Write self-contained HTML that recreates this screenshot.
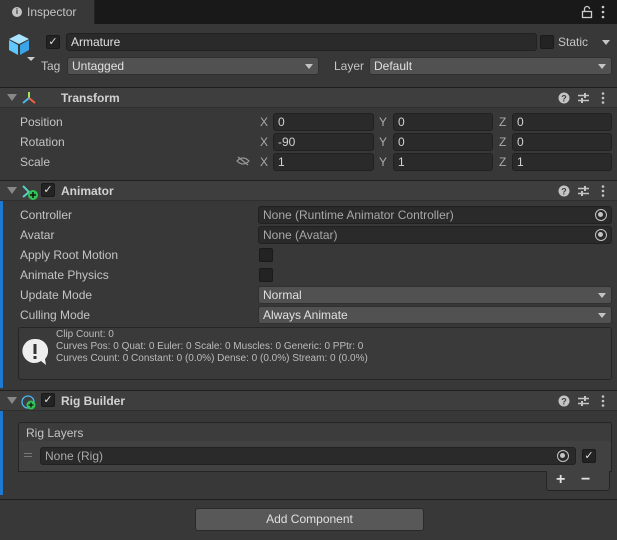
<!DOCTYPE html><html><head><style>
*{box-sizing:border-box;margin:0;padding:0}
body{width:617px;height:540px;background:#383838;font-family:"Liberation Sans",sans-serif;font-size:12px;color:#c4c4c4;position:relative;overflow:hidden}
.a{position:absolute}
.f{position:absolute;background:#2a2a2a;border:1px solid #212121;border-radius:3px;height:18px;line-height:16px;padding-left:4px;color:#d2d2d2}
.d{position:absolute;background:#515151;border:1px solid #303030;border-radius:3px;height:18px;line-height:16px;padding-left:4px;color:#e0e0e0}
.d:after{content:"";position:absolute;right:5px;top:6px;border-left:4px solid transparent;border-right:4px solid transparent;border-top:5px solid #c4c4c4}
.l{position:absolute;left:20px;color:#c4c4c4}
.hd{position:absolute;left:0;width:617px;height:21px;background:#3e3e3e;border-top:1px solid #1f1f1f;border-bottom:1px solid #2f2f2f}
.hd b{position:absolute;top:3px;font-size:12px;color:#d2d2d2}
.tri{position:absolute;left:7px;top:6px;border-left:5px solid transparent;border-right:5px solid transparent;border-top:7px solid #888}
.cb{position:absolute;width:14px;height:14px;background:#232323;border:1px solid #1a1a1a;border-radius:2px;color:#e0e0e0;font-size:11px;line-height:12px;text-align:center}
.xyz{position:absolute;color:#aaa}
.tg{position:absolute;right:4px;top:2px;width:12px;height:12px;border:1.5px solid #c4c4c4;border-radius:50%}
.tg:after{content:"";position:absolute;left:2px;top:2px;width:5px;height:5px;border-radius:50%;background:#c4c4c4}
.hi{position:absolute;left:556px;top:3px}
</style></head><body>
<svg width="0" height="0" style="position:absolute"><defs>
<g id="hicons">
<circle cx="8" cy="7" r="5.5" fill="#c4c4c4"/><text x="8" y="10.5" font-size="9" font-weight="bold" text-anchor="middle" fill="#3e3e3e" font-family="Liberation Sans">?</text>
<path d="M22 4.5h11M22 9.5h11" stroke="#c4c4c4" stroke-width="1.5"/><rect x="28" y="2" width="2" height="5" fill="#c4c4c4"/><rect x="25" y="7" width="2" height="5" fill="#c4c4c4"/>
<circle cx="47" cy="2.5" r="1.3" fill="#c4c4c4"/><circle cx="47" cy="7" r="1.3" fill="#c4c4c4"/><circle cx="47" cy="11.5" r="1.3" fill="#c4c4c4"/>
</g></defs></svg>
<div class="a" style="left:0;top:0;width:617px;height:24px;background:#191919"></div>
<div class="a" style="left:0;top:0;width:95px;height:24px;background:#383838;border-right:1px solid #222"></div>
<div class="a" style="left:12px;top:7px;width:10px;height:10px;border-radius:50%;background:#c4c4c4;color:#383838;font-size:8px;font-weight:bold;text-align:center;line-height:10px">i</div>
<div class="a" style="left:27px;top:5px;color:#c4c4c4">Inspector</div>
<svg class="a" style="left:580px;top:4px" width="30" height="16"><rect x="2.5" y="7.5" width="9" height="6" stroke="#ccc" stroke-width="1.3" fill="none"/><path d="M4.5 7.5V5a2.5 2.5 0 0 1 5 0" stroke="#ccc" stroke-width="1.3" fill="none"/><circle cx="23" cy="3" r="1.3" fill="#ccc"/><circle cx="23" cy="8" r="1.3" fill="#ccc"/><circle cx="23" cy="13" r="1.3" fill="#ccc"/></svg>
<svg class="a" style="left:8px;top:33px" width="28" height="30"><polygon points="11,1 21,6 11,11 1,6" fill="#a8e4ff"/><polygon points="1,7 10,12 10,22 1,17" fill="#5cc8ff"/><polygon points="12,12 21,7 21,17 12,22" fill="#3aa4e6"/><polygon points="19,24 27,24 23,28" fill="#ccc"/></svg>
<div class="cb" style="left:46px;top:35px">✓</div>
<div class="f" style="left:66px;top:33px;width:471px;color:#e0e0e0">Armature</div>
<div class="cb" style="left:540px;top:35px"></div>
<div class="a" style="left:558px;top:35px">Static</div>
<div class="a" style="left:602px;top:40px;border-left:4px solid transparent;border-right:4px solid transparent;border-top:5px solid #c4c4c4"></div>
<div class="a" style="left:41px;top:59px">Tag</div>
<div class="d" style="left:67px;top:57px;width:252px">Untagged</div>
<div class="a" style="left:334px;top:59px">Layer</div>
<div class="d" style="left:369px;top:57px;width:243px">Default</div>

<div class="hd" style="top:87px"><div class="tri"></div>
<svg class="a" style="left:22px;top:3px" width="14" height="14"><line x1="7" y1="7" x2="7" y2="1" stroke="#9fe55a" stroke-width="2"/><line x1="7" y1="7" x2="1" y2="12" stroke="#4ab8f0" stroke-width="2"/><line x1="7" y1="7" x2="13" y2="12" stroke="#f06040" stroke-width="2"/></svg>
<b style="left:61px">Transform</b><svg class="hi" width="52" height="14"><use href="#hicons"/></svg></div>
<div class="l" style="top:115px">Position</div><div class="l" style="top:135px">Rotation</div><div class="l" style="top:155px">Scale</div>
<svg class="a" style="left:236px;top:156px" width="14" height="10"><path d="M1 5q6-6 12 0q-6 6-12 0z" stroke="#999" stroke-width="1.2" fill="none"/><line x1="2" y1="1" x2="12" y2="9" stroke="#999" stroke-width="1.2"/></svg>
<div class="xyz" style="left:260px;top:115px">X</div><div class="f" style="left:273px;top:113px;width:101px">0</div>
<div class="xyz" style="left:379px;top:115px">Y</div><div class="f" style="left:393px;top:113px;width:100px">0</div>
<div class="xyz" style="left:499px;top:115px">Z</div><div class="f" style="left:512px;top:113px;width:100px">0</div>
<div class="xyz" style="left:260px;top:135px">X</div><div class="f" style="left:273px;top:133px;width:101px">-90</div>
<div class="xyz" style="left:379px;top:135px">Y</div><div class="f" style="left:393px;top:133px;width:100px">0</div>
<div class="xyz" style="left:499px;top:135px">Z</div><div class="f" style="left:512px;top:133px;width:100px">0</div>
<div class="xyz" style="left:260px;top:155px">X</div><div class="f" style="left:273px;top:153px;width:101px">1</div>
<div class="xyz" style="left:379px;top:155px">Y</div><div class="f" style="left:393px;top:153px;width:100px">1</div>
<div class="xyz" style="left:499px;top:155px">Z</div><div class="f" style="left:512px;top:153px;width:100px">1</div>

<div class="a" style="left:0;top:181px;width:3px;height:207px;background:#1e7ad0"></div>
<div class="hd" style="top:180px"><div class="tri"></div>
<svg class="a" style="left:22px;top:3px" width="16" height="16"><path d="M1 2 L7 8 L1 13" stroke="#5ad0c0" stroke-width="2" fill="none"/><circle cx="11" cy="11" r="5" fill="#2fc454"/><path d="M11 8v6M8 11h6" stroke="#111" stroke-width="1.5"/></svg>
<div class="cb" style="left:41px;top:2px">✓</div>
<b style="left:61px">Animator</b><svg class="hi" width="52" height="14"><use href="#hicons"/></svg></div>
<div class="l" style="top:208px">Controller</div><div class="f" style="left:258px;top:206px;width:354px;color:#a8a8a8">None (Runtime Animator Controller)<span class="tg"></span></div>
<div class="l" style="top:228px">Avatar</div><div class="f" style="left:258px;top:226px;width:354px;color:#a8a8a8">None (Avatar)<span class="tg"></span></div>
<div class="l" style="top:248px">Apply Root Motion</div><div class="cb" style="left:259px;top:248px"></div>
<div class="l" style="top:268px">Animate Physics</div><div class="cb" style="left:259px;top:268px"></div>
<div class="l" style="top:288px">Update Mode</div><div class="d" style="left:258px;top:286px;width:354px">Normal</div>
<div class="l" style="top:308px">Culling Mode</div><div class="d" style="left:258px;top:306px;width:354px">Always Animate</div>
<div class="a" style="left:18px;top:327px;width:594px;height:53px;background:#3a3a3a;border:1px solid #252525;border-radius:3px"></div>
<svg class="a" style="left:22px;top:338px" width="26" height="30"><path d="M13 1a12 12 0 1 0 6 22l5 4-1-6a12 12 0 0 0-10-20z" fill="#eee"/><rect x="11.5" y="6" width="3" height="10" fill="#333"/><rect x="11.5" y="18" width="3" height="3" fill="#333"/></svg>
<div class="a" style="left:56px;top:329px;font-size:10px;line-height:12px;color:#bbb">Clip Count: 0<br>Curves Pos: 0 Quat: 0 Euler: 0 Scale: 0 Muscles: 0 Generic: 0 PPtr: 0<br>Curves Count: 0 Constant: 0 (0.0%) Dense: 0 (0.0%) Stream: 0 (0.0%)</div>

<div class="a" style="left:0;top:391px;width:3px;height:104px;background:#1e7ad0"></div>
<div class="hd" style="top:390px"><div class="tri"></div>
<svg class="a" style="left:21px;top:3px" width="16" height="16"><circle cx="7" cy="8" r="6" stroke="#4ab8f0" stroke-width="1.3" fill="none"/><circle cx="10" cy="11" r="4.5" fill="#2fc454"/><path d="M10 8.5v5M7.5 11h5" stroke="#111" stroke-width="1.3"/></svg>
<div class="cb" style="left:41px;top:2px">✓</div>
<b style="left:61px">Rig Builder</b><svg class="hi" width="52" height="14"><use href="#hicons"/></svg></div>
<div class="a" style="left:18px;top:422px;width:594px;height:20px;background:#3c3c3c;border:1px solid #242424;border-radius:3px 3px 0 0;padding:3px 0 0 7px">Rig Layers</div>
<div class="a" style="left:18px;top:441px;width:594px;height:31px;background:#414141;border:1px solid #242424;border-top:none"></div>
<div class="a" style="left:24px;top:453px;width:8px;height:4px;border-top:1px solid #777;border-bottom:1px solid #777"></div>
<div class="f" style="left:40px;top:447px;width:536px;color:#a8a8a8">None (Rig)<span class="tg" style="right:6px"></span></div>
<div class="cb" style="left:582px;top:449px">✓</div>
<div class="a" style="left:546px;top:471px;width:64px;height:20px;background:#414141;border:1px solid #242424;border-top:none;border-radius:0 0 3px 3px;color:#e0e0e0;font-size:16px;font-weight:bold;line-height:18px"><span class="a" style="left:9px">+</span><span class="a" style="left:34px">−</span></div>
<div class="a" style="left:0;top:499px;width:617px;height:1px;background:#1f1f1f"></div>
<div class="a" style="left:195px;top:508px;width:229px;height:23px;background:#585858;border:1px solid #2a2a2a;border-radius:3px;text-align:center;line-height:21px;color:#e0e0e0">Add Component</div>
</body></html>
